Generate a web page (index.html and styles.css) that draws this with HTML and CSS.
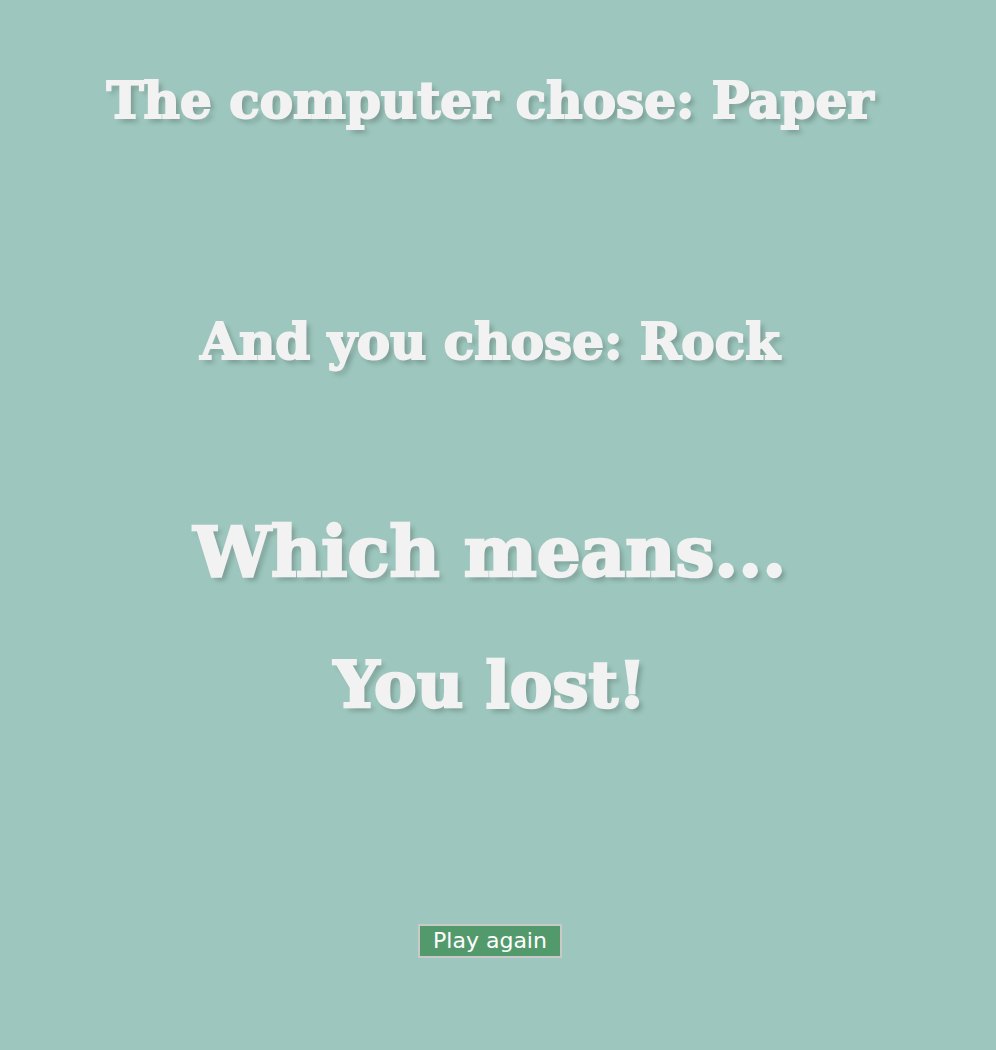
FILE: index.html
```html
<!DOCTYPE html>
<html>
<head>
<meta charset="utf-8">
<link rel="stylesheet" href="styles.css">
</head>
<body>
<main class="game">
  <h2 class="line computer">The computer chose: Paper</h2>
  <h2 class="line player">And you chose: Rock</h2>
  <h1 class="line means">Which means...</h1>
  <h1 class="line result">You lost!</h1>
  <button class="again">Play again</button>
</main>
</body>
</html>
```
FILE: styles.css
```css
html, body {
  margin: 0;
  padding: 0;
  background: #9dc7be;
}
body {
  width: 996px;
  height: 1050px;
}
.game {
  width: 980px;
  display: flex;
  flex-direction: column;
  align-items: center;
}
.line {
  margin: 0;
  color: #f2f2f2;
  font-family: "DejaVu Serif", serif;
  font-weight: bold;
  text-shadow: 4px 4px 5px rgba(0, 0, 0, 0.22);
  -webkit-text-stroke: 2px #f2f2f2;
  white-space: nowrap;
}
.computer {
  font-size: 50px;
  line-height: 60px;
  margin-top: 71px;
}
.player {
  font-size: 50px;
  line-height: 60px;
  margin-top: 181px;
}
.means {
  font-size: 69px;
  line-height: 80px;
  margin-top: 140px;
  -webkit-text-stroke: 2.5px #f2f2f2;
}
.result {
  font-size: 64px;
  line-height: 80px;
  margin-top: 53px;
  -webkit-text-stroke: 2.5px #f2f2f2;
}
.again {
  margin-top: 199px;
  width: 144px;
  height: 34px;
  background: #529a6b;
  border: 2px solid #c9c9c9;
  color: #ffffff;
  font-family: "DejaVu Sans", Verdana, sans-serif;
  font-size: 22px;
  line-height: 30px;
  padding: 0;
}
```
